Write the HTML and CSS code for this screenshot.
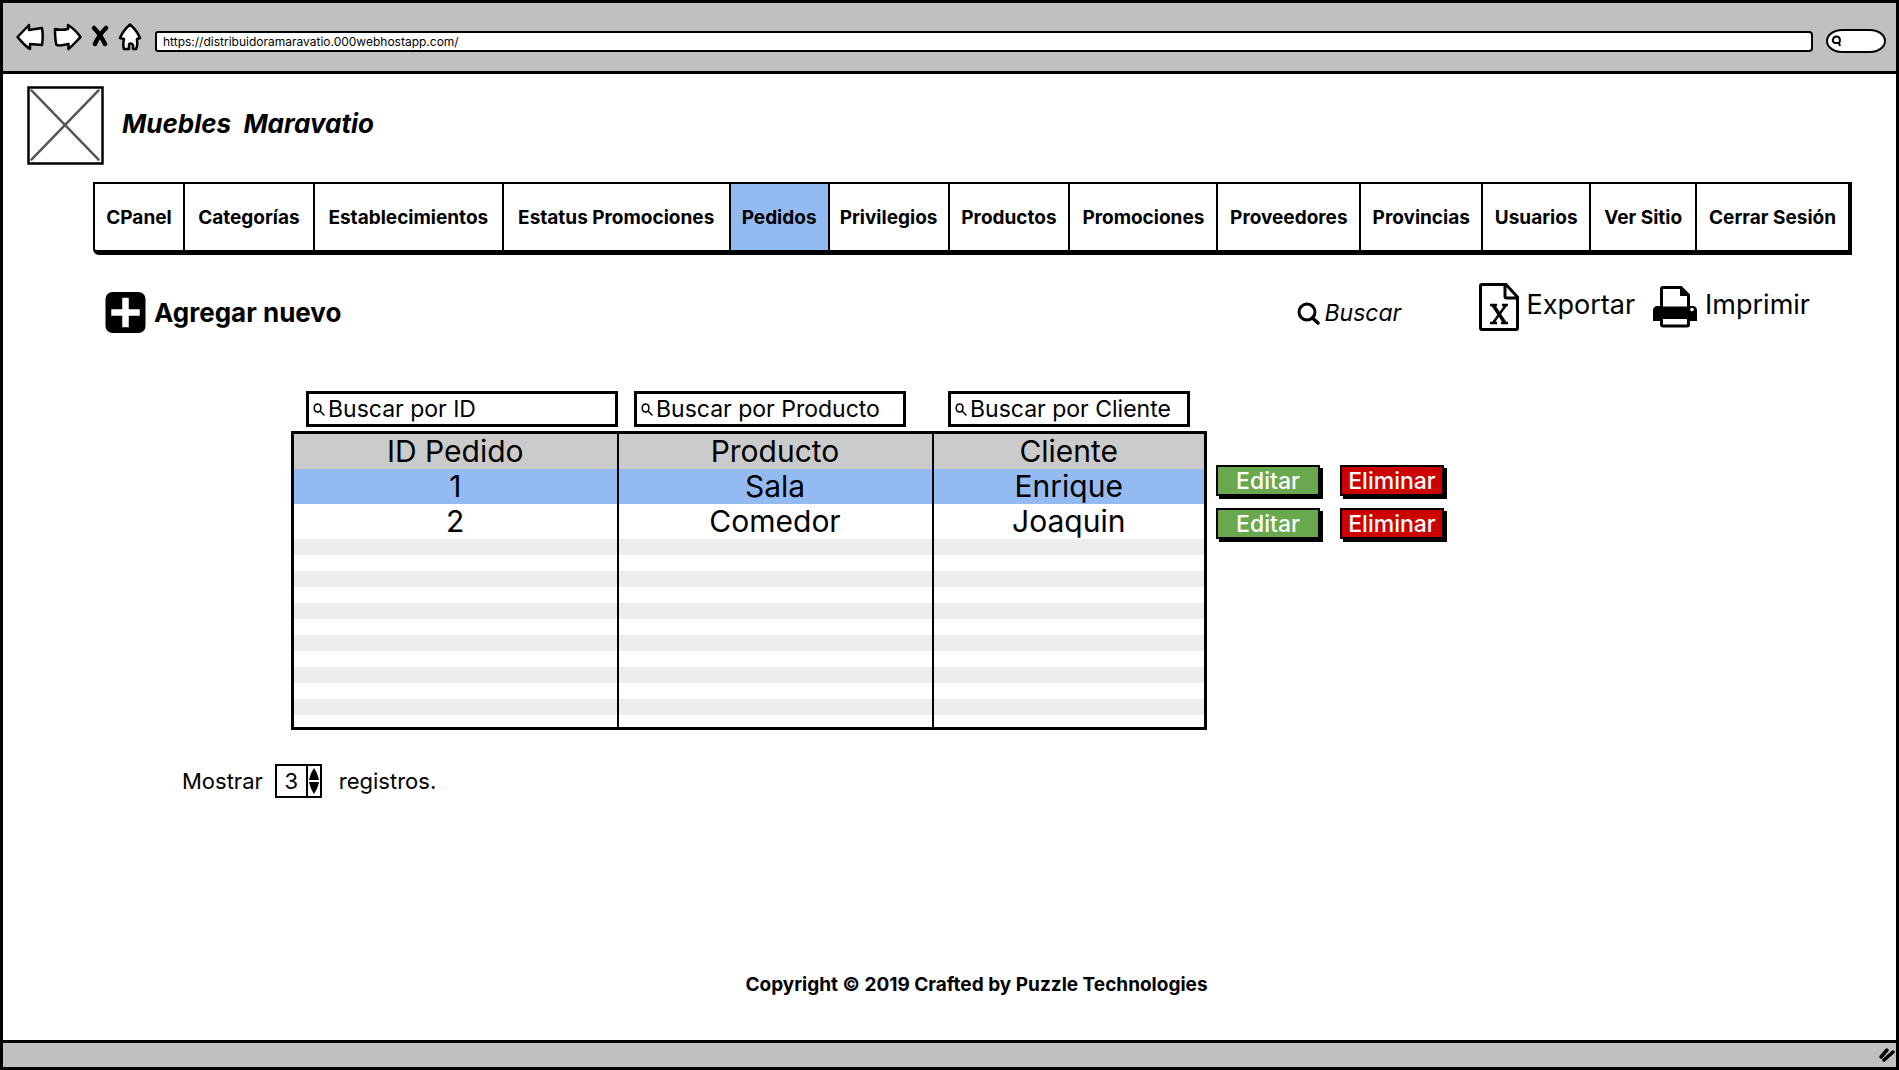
FILE: index.html
```html
<!DOCTYPE html>
<html lang="es">
<head>
<meta charset="utf-8">
<meta name="viewport" content="width=device-width, initial-scale=1">
<title>Muebles Maravatio - Pedidos</title>
<link rel="stylesheet" href="styles.css">
</head>
<body>
<div class="window">
  <div class="chrome">
    <div class="chrome-buttons">
      <button type="button" class="icon-button" aria-label="Atrás">
        <svg width="28" height="28" viewBox="0 0 28 28"><path class="sketch" d="M1.500 14 13 2v5l13-2c1 6 1 11 0 17l-12-1v5C9 23 6 19 1.500 14z"/></svg>
      </button>
      <button type="button" class="icon-button" aria-label="Adelante">
        <svg width="29" height="28" viewBox="0 0 29 28"><path class="sketch" d="M2 6c4 1 9 1 13 0V2c5 3 9 7 12.500 12-4 4-7 8-12 12v-5c-4 1-9 2-12 1C2 17 2 11 2 6z"/></svg>
      </button>
      <button type="button" class="icon-button" aria-label="Detener">
        <svg width="18" height="28" viewBox="0 0 18 28"><path d="M3 5c4 4 8 10 11 16M15 5C11 9 7 14 4 21" fill="none" stroke="#000" stroke-width="4.500" stroke-linecap="round"/></svg>
      </button>
      <button type="button" class="icon-button" aria-label="Inicio">
        <svg width="24" height="28" viewBox="0 0 24 28"><path class="sketch" d="M12 1.500C16 5 20 10 22 15l-3 1c0 4 1 7-1 10h-3v-4c-1-2-4-2-4 0v4H6c-1-3-1-6 0-10l-4-1C4 10 8 5 12 1.500z"/></svg>
      </button>
    </div>
    <input class="address" type="text" aria-label="Dirección" value="https://distribuidoramaravatio.000webhostapp.com/">
    <label class="chrome-search">
      <svg width="12" height="12" viewBox="0 0 12 12"><path d="M8 8H4C0 7 2 1 6 1.500 10 2 9 7 8 8l1 3" fill="none" stroke="#000" stroke-width="2"/></svg>
      <input type="search" aria-label="Buscar en la web">
    </label>
  </div>

  <header class="brand">
    <svg class="logo" width="77" height="79" viewBox="0 0 78 80" role="img" aria-label="Logotipo">
      <path d="M1.500 1.500h75v77h-75z" fill="#fff" stroke="#000" stroke-width="2.500"/>
      <path d="M4.500 4.500l68 70M72.500 4.500l-68 70" stroke="#555" stroke-width="2.500" stroke-linecap="round"/>
    </svg>
    <h1>Muebles&nbsp; Maravatio</h1>
  </header>

  <nav class="menu">
    <a href="#">CPanel</a>
    <a href="#">Categorías</a>
    <a href="#">Establecimientos</a>
    <a href="#">Estatus Promociones</a>
    <a href="#" class="current" aria-current="page">Pedidos</a>
    <a href="#">Privilegios</a>
    <a href="#">Productos</a>
    <a href="#">Promociones</a>
    <a href="#">Proveedores</a>
    <a href="#">Provincias</a>
    <a href="#">Usuarios</a>
    <a href="#">Ver Sitio</a>
    <a href="#">Cerrar Sesión</a>
  </nav>

  <main>
    <div class="toolbar">
      <button type="button" class="tool add">
        <svg width="41" height="41" viewBox="0 0 40 41"><rect width="40" height="41" rx="7"/><path d="M20 9v23M9 20.500h22" stroke="#fff" stroke-width="6.500" stroke-linecap="square"/></svg>
        <span>Agregar nuevo</span>
      </button>
      <label class="quick-search">
        <svg width="24" height="24" viewBox="0 0 24 24"><circle cx="10" cy="11" r="8" fill="none" stroke="#000" stroke-width="3"/><path d="M15.500 17l5.500 5" stroke="#000" stroke-width="3.500" stroke-linecap="round"/></svg>
        <input type="search" placeholder="Buscar" aria-label="Buscar">
      </label>
      <button type="button" class="tool export">
        <svg width="40" height="48" viewBox="0 0 40 48"><path d="M3 1.500h24L38.500 14v31c0 1-.5 1.500-1.500 1.500H3c-1 0-1.500-.5-1.500-1.500V3c0-1 .5-1.500 1.500-1.500zM26 2v11.500c0 1 .5 1.500 1.500 1.500H38" fill="#fff" stroke="#000" stroke-width="3"/><path d="M14 22l12 18" stroke="#000" stroke-width="3.500"/><path d="M27 22L14 40M11 22h7M23 22h6M11 40h7M22 40h7" fill="none" stroke="#000" stroke-width="2.500"/></svg>
        <span>Exportar</span>
      </button>
      <button type="button" class="tool export">
        <svg width="44" height="42" viewBox="0 0 44 42"><path d="M4 20h36c2 0 4 2 4 4v11H0V24c0-2 2-4 4-4z"/><path d="M8.500 22V3c0-1 .5-1.500 1.500-1.500h18L35.500 9v13z" fill="#fff" stroke="#000" stroke-width="3"/><path d="M27 2v8h8z"/><path d="M7 21h30v10H7z"/><path d="M8.500 31.500h27v7c0 1-.5 1.500-1.500 1.500H10c-1 0-1.500-.5-1.500-1.500z" fill="#fff" stroke="#000" stroke-width="3"/><circle cx="39" cy="23.500" r="1.800" fill="#fff"/></svg>
        <span>Imprimir</span>
      </button>
    </div>

    <section class="orders">
      <div class="board">
        <div class="filters">
          <label class="filter">
            <svg width="12" height="14" viewBox="0 0 12 14"><use href="#lens"/></svg>
            <input type="search" placeholder="Buscar por ID" aria-label="Buscar por ID">
          </label>
          <label class="filter">
            <svg width="12" height="14" viewBox="0 0 12 14"><use href="#lens"/></svg>
            <input type="search" placeholder="Buscar por Producto" aria-label="Buscar por Producto">
          </label>
          <label class="filter">
            <svg width="12" height="14" viewBox="0 0 12 14"><use href="#lens"/></svg>
            <input type="search" placeholder="Buscar por Cliente" aria-label="Buscar por Cliente">
          </label>
        </div>
        <table>
          <colgroup><col class="col-id"><col class="col-product"><col class="col-client"></colgroup>
          <thead><tr><th scope="col">ID Pedido</th><th scope="col">Producto</th><th scope="col">Cliente</th></tr></thead>
          <tbody>
            <tr class="selected"><td>1</td><td>Sala</td><td>Enrique</td></tr>
            <tr><td>2</td><td>Comedor</td><td>Joaquin</td></tr>
            <tr class="blank"><td></td><td></td><td></td></tr>
          </tbody>
        </table>
      </div>
      <div class="actions">
        <button type="button" class="action edit">Editar</button>
        <button type="button" class="action delete">Eliminar</button>
        <button type="button" class="action edit">Editar</button>
        <button type="button" class="action delete">Eliminar</button>
      </div>
    </section>

    <div class="paging">
      <label for="page-size">Mostrar</label>
      <div class="stepper">
        <input id="page-size" type="number" value="3" min="1">
        <div class="steps">
          <button type="button" aria-label="Más"><svg width="10" height="12" viewBox="0 0 10 12"><path d="M5 0c2 3 4 7 5 12H0C1 7 3 3 5 0z"/></svg></button>
          <button type="button" aria-label="Menos"><svg width="10" height="12" viewBox="0 0 10 12"><path d="M0 0h10C9 5 7 9 5 12 3 9 1 5 0 0z"/></svg></button>
        </div>
      </div>
      <span class="unit">registros.</span>
    </div>
  </main>

  <footer>Copyright © 2019 Crafted by Puzzle Technologies</footer>

  <div class="statusbar">
    <svg width="18" height="16" viewBox="0 0 18 16"><path d="M3 10l6-7M6 13l9-8" stroke="#000" stroke-width="3.500" stroke-linecap="round"/></svg>
  </div>
</div>
<svg class="symbols" width="0" height="0" aria-hidden="true">
  <symbol id="lens" viewBox="0 0 12 14"><path d="M5 2C0 2 0 10 4.500 10S9 2 5 2zM7 9l4 4" fill="none" stroke="#000" stroke-width="1.500" stroke-linecap="round"/></symbol>
</svg>
</body>
</html>
```
FILE: styles.css
```css
* { box-sizing: border-box; }

body {
  margin: 0;
  background: #fff;
  color: #000;
  font-family: Inter, "Liberation Sans", sans-serif;
  font-size: 23px;
}

button, input { font: inherit; color: inherit; }
button { padding: 0; border: 0; background: none; cursor: pointer; }
input { min-width: 0; padding: 0; border: 0; background: none; outline: 0; }
input::placeholder { color: inherit; opacity: 1; }
input::-webkit-search-cancel-button { display: none; }
svg { display: block; flex: none; }
.symbols { position: absolute; top: 0; }

.window {
  display: flex;
  flex-direction: column;
  min-height: 100vh;
  border: 3px solid #000;
}

/* Browser frame */
.chrome {
  display: flex;
  align-items: center;
  gap: 13px;
  height: 71px;
  padding: 8px 10px 0 13px;
  border-bottom: 3px solid #000;
  background: #c0c0c0;
}
.chrome-buttons { display: flex; gap: 9px; padding-bottom: 8px; }
.sketch { fill: #fff; stroke: #000; stroke-width: 2.5; stroke-linejoin: round; }
.address {
  flex: 1;
  height: 21px;
  padding: 0 6px;
  border: 2px solid #000;
  border-radius: 3px 4px 4px 3px;
  background: #fff;
  font-size: 12px;
}
.chrome-search {
  display: flex;
  align-items: center;
  width: 60px;
  height: 24px;
  padding: 0 3px;
  border: 2px solid #000;
  border-radius: 16px / 12px;
  background: #fff;
}
.chrome-search input { width: 100%; font-size: 12px; }

/* Brand and menu */
.brand {
  display: flex;
  align-items: center;
  gap: 18px;
  padding: 12px 24px 0;
}
.brand h1 {
  margin: 0 0 4px;
  font-size: 26px;
  font-style: italic;
  line-height: 32px;
}
.menu {
  display: grid;
  grid-template-columns: 88fr 130fr 189fr 227fr 99fr 120fr 121fr 148fr 143fr 122fr 108fr 106fr 153fr;
  margin: 17px 44px 0 90px;
  border: 2px solid #000;
  border-width: 2px 4px 5px 2px;
  border-radius: 0 0 0 6px;
}
.menu a {
  padding: 22px 0 20px;
  border-left: 2px solid #000;
  color: inherit;
  font-size: 19px;
  font-weight: 700;
  line-height: 24px;
  text-align: center;
  text-decoration: none;
  white-space: nowrap;
}
.menu a:first-child { border-left: 0; }
.menu .current { background: #94baf2; }

/* Toolbar */
.toolbar {
  display: flex;
  align-items: center;
  padding: 25px 86px 0 102px;
}
.tool {
  display: flex;
  align-items: center;
  gap: 8px;
  font-size: 26px;
  line-height: 32px;
}
.add { margin-right: auto; padding-top: 12px; font-weight: 700; }
.export { font-size: 27px; }
.export span { padding-bottom: 4px; }
.export + .export { margin-left: 18px; }
.quick-search {
  display: flex;
  align-items: center;
  gap: 4px;
  width: 182px;
  padding-top: 12px;
  font-style: italic;
}
.quick-search input { width: 150px; }

/* Orders */
.orders {
  display: grid;
  grid-template-columns: minmax(0, 288fr) minmax(0, 916fr) minmax(0, 689fr);
  padding-top: 58px;
}
.board { grid-column: 2; }
.filters {
  display: grid;
  grid-template-columns: minmax(0, 328fr) minmax(0, 314fr) minmax(0, 274fr);
  padding-bottom: 4px;
}
.filter {
  display: flex;
  align-items: center;
  gap: 3px;
  height: 36px;
  margin: 0 27px 0 15px;
  padding: 0 4px;
  border: 3px solid #000;
}
.filter:first-child { margin-right: 1px; }
.filter:last-child { margin-right: 17px; }
.filter input { flex: 1; }

table {
  width: 100%;
  border: 3px solid #000;
  border-collapse: collapse;
  table-layout: fixed;
  font-size: 30px;
  line-height: 35px;
  text-align: center;
}
.col-id { width: 35.6%; }
.col-product { width: 34.5%; }
th, td { padding: 0; border-left: 2px solid #000; font-weight: 400; }
th { background: #cbcbcb; }
.selected { background: #94baf2; }
.blank td {
  height: 189px;
  background-image: repeating-linear-gradient(#ededed 0 16px, #fff 16px 32px);
}

.actions {
  display: grid;
  grid-template-columns: 104px 104px;
  gap: 12px 20px;
  align-content: start;
  padding: 74px 0 0 9px;
}
.action {
  height: 31px;
  border: 2px solid #000;
  box-shadow: 3px 3px #000;
  color: #fff;
  font-weight: 500;
  line-height: 26px;
}
.edit { background: #6aa84f; }
.delete { background: #c00; }

/* Page size */
.paging {
  display: flex;
  align-items: center;
  gap: 12px;
  padding: 34px 179px 0;
  font-size: 22px;
}
.stepper {
  display: flex;
  width: 47px;
  height: 34px;
  border: 2px solid #000;
}
.stepper input {
  width: 29px;
  text-align: center;
  appearance: textfield;
}
.stepper input::-webkit-inner-spin-button { display: none; }
.steps {
  display: flex;
  flex: 1;
  flex-direction: column;
  align-items: center;
  justify-content: center;
  gap: 2px;
  border-left: 2px solid #000;
}
.unit { padding-left: 5px; }

footer {
  margin-top: auto;
  padding: 0 0 43px 54px;
  font-size: 19px;
  font-weight: 700;
  line-height: 24px;
  text-align: center;
}
.statusbar {
  display: flex;
  align-items: center;
  justify-content: flex-end;
  height: 27px;
  border-top: 3px solid #000;
  background: #c0c0c0;
}
```
